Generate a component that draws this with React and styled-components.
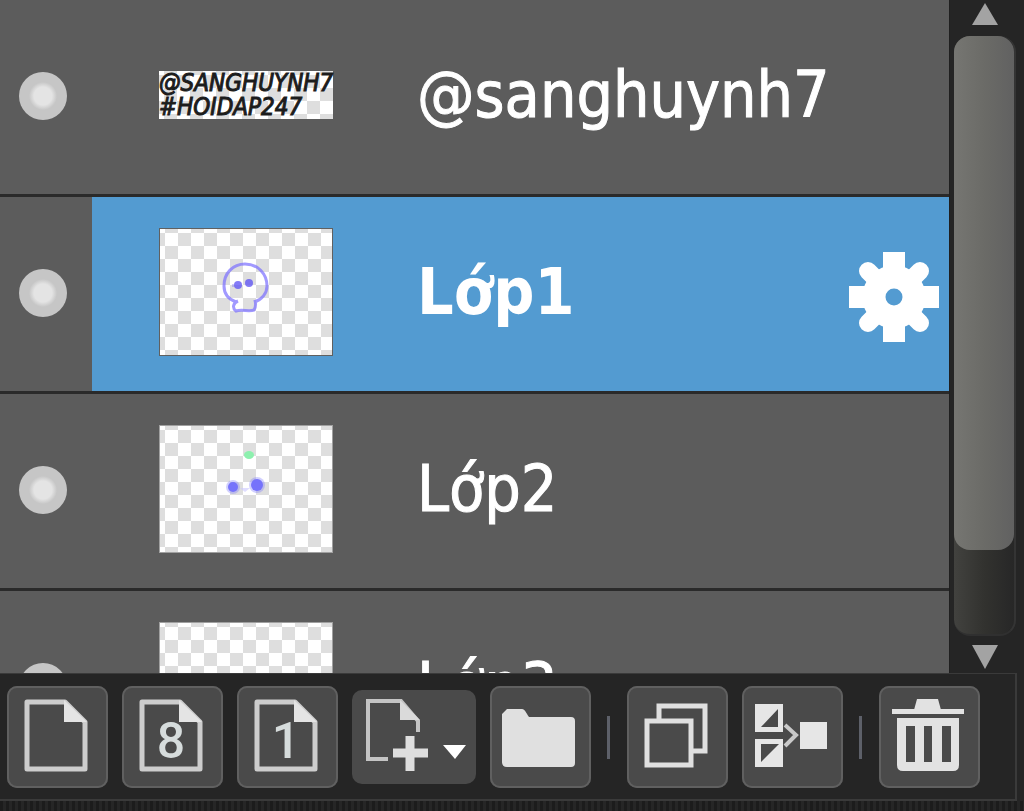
import React, { useState } from "react";
import styled, { createGlobalStyle } from "styled-components";

const layers = [
  { id: "tag", name: "@sanghuynh7", art: "text" },
  { id: "l1", name: "Lớp1", art: "skull" },
  { id: "l2", name: "Lớp2", art: "eyes" },
  { id: "l3", name: "Lớp3", art: "empty" },
];

const Skull = () => (
  <svg width="172" height="126" viewBox="0 0 172 126" aria-hidden="true">
    <g fill="none" stroke="#7a6eff" strokeWidth="3" opacity="0.7">
      <path d="M76 73C68 70 64 64 64 57C64 44 73 35 85 35C98 35 107 45 107 57C107 64 102 71 94 73" />
      <path d="M78 72C73 74 72 79 76 82C82 80 89 83 94 81C96 78 96 75 95 71" />
    </g>
    <g fill="#5b50f5" opacity="0.75">
      <circle cx="78" cy="56" r="4" />
      <circle cx="89" cy="54" r="4" />
      <path d="M72 55h4v3h-4z" opacity="0.4" />
    </g>
  </svg>
);

const Eyes = () => (
  <svg width="172" height="126" viewBox="0 0 172 126" aria-hidden="true">
    <ellipse cx="89" cy="29" rx="5" ry="4" fill="#8df0ae" />
    <circle cx="73" cy="61" r="7" fill="#7a78fb" opacity="0.35" />
    <circle cx="73" cy="61" r="5" fill="#7673fb" />
    <circle cx="97" cy="59" r="8" fill="#7a78fb" opacity="0.35" />
    <circle cx="97" cy="59" r="6" fill="#7673fb" />
    <path d="M80 62L90 62L85 66Z" fill="#c9c6ff" opacity="0.6" />
  </svg>
);

const GearIcon = () => (
  <svg width="90" height="90" viewBox="-45 -45 90 90" aria-hidden="true">
    <g stroke="white" fill="none">
      <path d="M0 -45V-14M0 45V14M-45 0H-14M45 0H14" strokeWidth="22" />
      <path
        d="M-26 -26L-17 -17M26 -26L17 -17M-26 26L-17 17M26 26L17 17"
        strokeWidth="18"
        strokeLinecap="round"
      />
      <circle r="20" strokeWidth="23" />
    </g>
  </svg>
);

const PageIcon = ({ digit }) => (
  <svg width="101" height="102" viewBox="0 0 101 102" aria-hidden="true">
    <path
      d="M20 16H58L78 36V83H20Z"
      fill="none"
      stroke="#cdcdcd"
      strokeWidth="5"
      strokeLinejoin="round"
    />
    <path d="M57 14L80 36H57Z" fill="#e4e4e4" />
    {digit && (
      <text
        x="49"
        y="72"
        textAnchor="middle"
        fontSize="50"
        fontWeight="500"
        fill="#d6dcdc"
      >
        {digit}
      </text>
    )}
  </svg>
);

const AddPageIcon = () => (
  <svg width="124" height="94" viewBox="0 0 124 94" aria-hidden="true">
    <path
      d="M36 69H16V11H49L66 31V42"
      fill="none"
      stroke="#c4c4c4"
      strokeWidth="4"
    />
    <path d="M48 10L68 30H48Z" fill="#dadada" />
    <path d="M58 46V81M41 63H76" stroke="#dedede" strokeWidth="9" />
    <path d="M91 55H114L103 69Z" fill="white" />
  </svg>
);

const FolderIcon = () => (
  <svg width="101" height="102" viewBox="0 0 101 102" aria-hidden="true">
    <path
      d="M12 28L17 23H32C35 23 36 27 39 31H81Q85 31 85 35V77Q85 81 81 81H17Q12 81 12 76Z"
      fill="#e0e0e0"
    />
  </svg>
);

const CopyIcon = () => (
  <svg width="101" height="102" viewBox="0 0 101 102" aria-hidden="true">
    <g fill="#4a4a4a" stroke="#e0e0e0" strokeWidth="5">
      <rect x="32" y="20" width="46" height="45" />
      <rect x="20" y="35" width="44" height="44" />
    </g>
  </svg>
);

const MergeIcon = () => (
  <svg width="101" height="102" viewBox="0 0 101 102" aria-hidden="true">
    <g fill="#e6e6e6">
      <rect x="13" y="18" width="28" height="28" />
      <rect x="13" y="53" width="28" height="28" />
      <rect x="58" y="36" width="27" height="27" />
    </g>
    <path d="M19 41H36V23ZM19 58H37L19 76Z" fill="#4a4a4a" />
    <path d="M43 39L54 49L43 60" fill="none" stroke="#c9c9c9" strokeWidth="4" />
  </svg>
);

const TrashIcon = () => (
  <svg width="101" height="102" viewBox="0 0 101 102" aria-hidden="true">
    <path d="M35 24L38 13H59L62 24Z" fill="#e2e2e2" />
    <path d="M13 23H85V28H13Z" fill="#e2e2e2" />
    <path
      fillRule="evenodd"
      d="M18 32H80V79Q80 85 74 85H24Q18 85 18 79ZM27 40V76H36V40ZM45 40V76H53V40ZM63 40V76H72V40Z"
      fill="#e2e2e2"
    />
  </svg>
);

const Thumbnail = ({ art, active }) => {
  if (art === "text") {
    return (
      <TextThumb>
        <span>@SANGHUYNH7</span>
        <span>#HOIDAP247</span>
      </TextThumb>
    );
  }
  return (
    <Thumb $active={active}>
      {art === "skull" && <Skull />}
      {art === "eyes" && <Eyes />}
    </Thumb>
  );
};

const App = () => {
  const [selected, setSelected] = useState("l1");
  return (
    <>
      <GlobalStyle />
      <Panel>
        <ListArea>
          <LayerList>
            {layers.map((layer) => {
              const active = layer.id === selected;
              return (
                <Row key={layer.id}>
                  <ToggleCell>
                    <Toggle
                      type="checkbox"
                      defaultChecked
                      aria-label={`Hiện ${layer.name}`}
                    />
                  </ToggleCell>
                  <LayerCell $active={active}>
                    <LayerButton
                      type="button"
                      $active={active}
                      onClick={() => setSelected(layer.id)}
                    >
                      <Thumbnail art={layer.art} active={active} />
                      <span>{layer.name}</span>
                    </LayerButton>
                    {active && (
                      <GearButton type="button" aria-label="Cài đặt lớp">
                        <GearIcon />
                      </GearButton>
                    )}
                  </LayerCell>
                </Row>
              );
            })}
          </LayerList>
          <ScrollBar>
            <Arrow type="button" aria-label="Cuộn lên">
              <svg width="26" height="22" viewBox="0 0 26 22">
                <path d="M13 0L26 22H0Z" fill="#a3a3a3" />
              </svg>
            </Arrow>
            <Track>
              <ScrollThumb />
            </Track>
            <Arrow type="button" aria-label="Cuộn xuống">
              <svg width="26" height="24" viewBox="0 0 26 24">
                <path d="M0 0H26L13 24Z" fill="#a3a3a3" />
              </svg>
            </Arrow>
          </ScrollBar>
        </ListArea>
        <Toolbar>
          <ToolButton type="button" aria-label="Lớp màu mới">
            <PageIcon />
          </ToolButton>
          <ToolButton type="button" aria-label="Lớp 8 bit mới">
            <PageIcon digit="8" />
          </ToolButton>
          <ToolButton type="button" aria-label="Lớp 1 bit mới">
            <PageIcon digit="1" />
          </ToolButton>
          <ToolButton type="button" aria-label="Thêm lớp" $menu>
            <AddPageIcon />
          </ToolButton>
          <ToolButton type="button" aria-label="Thư mục mới">
            <FolderIcon />
          </ToolButton>
          <Divider />
          <ToolButton type="button" aria-label="Nhân đôi lớp">
            <CopyIcon />
          </ToolButton>
          <ToolButton type="button" aria-label="Gộp lớp">
            <MergeIcon />
          </ToolButton>
          <Divider />
          <ToolButton type="button" aria-label="Xóa lớp">
            <TrashIcon />
          </ToolButton>
        </Toolbar>
        <BottomEdge />
      </Panel>
    </>
  );
};

const GlobalStyle = createGlobalStyle`
  * {
    box-sizing: border-box;
  }
  body {
    margin: 0;
    background: #252525;
    font-family: "DejaVu Sans Condensed", "DejaVu Sans", sans-serif;
  }
  button {
    border: none;
    padding: 0;
    margin: 0;
    background: none;
    color: inherit;
    font: inherit;
    cursor: pointer;
  }
  svg {
    display: block;
  }
`;

const Panel = styled.main`
  display: flex;
  flex-direction: column;
  height: 100vh;
  background: #252525;
`;

const ListArea = styled.div`
  display: flex;
  flex: 1;
  min-height: 0;
`;

const LayerList = styled.div`
  flex: 1;
  min-width: 0;
  overflow: hidden;
  background: #5c5c5c;
`;

const Row = styled.div`
  display: flex;
  height: 197px;
  border-bottom: 3px solid #2a2a2a;
`;

const ToggleCell = styled.div`
  display: flex;
  flex: none;
  align-items: center;
  width: 92px;
  padding: 0 0 2px 19px;
`;

const Toggle = styled.input`
  appearance: none;
  width: 48px;
  height: 48px;
  margin: 0;
  border-radius: 50%;
  background: #777;
  cursor: pointer;
  &:checked {
    background: radial-gradient(circle, #e4e4e4 9px, #c6c6c6 14px);
  }
`;

const LayerCell = styled.div`
  display: flex;
  flex: 1;
  align-items: center;
  min-width: 0;
  padding-right: 10px;
  background: ${({ $active }) => ($active ? "#539bd1" : "transparent")};
`;

const LayerButton = styled.button`
  display: flex;
  flex: 1;
  align-items: center;
  gap: 84px;
  min-width: 0;
  height: 100%;
  padding: 0 0 4px 67px;
  color: white;
  font-size: 64px;
  font-weight: ${({ $active }) => ($active ? "bold" : "normal")};
  text-align: left;
  white-space: nowrap;
  -webkit-text-stroke: ${({ $active }) => ($active ? "0" : "1px")} white;
`;

const Thumb = styled.div`
  flex: none;
  width: 174px;
  height: 128px;
  border: 1px solid ${({ $active }) => ($active ? "#606060" : "#a0a0a0")};
  background: conic-gradient(#dedede 25%, white 0 50%, #dedede 0 75%, white 0)
    5px 4px / 26px 26px;
`;

const TextThumb = styled(Thumb)`
  display: flex;
  flex-direction: column;
  justify-content: center;
  height: 48px;
  border: none;
  color: #1c1c1c;
  font-size: 24px;
  font-style: italic;
  font-weight: normal;
  line-height: 24px;
  -webkit-text-stroke: 1px #1c1c1c;
`;

const GearButton = styled.button`
  flex: none;
  padding-top: 6px;
`;

const ScrollBar = styled.div`
  display: flex;
  flex: none;
  flex-direction: column;
  align-items: center;
  width: 75px;
  padding: 3px 8px 4px 4px;
  border-left: 1px solid #1f1f1f;
`;

const Arrow = styled.button`
  flex: none;
`;

const Track = styled.div`
  flex: 1;
  width: 100%;
  min-height: 0;
  margin: 11px 0 9px;
  border-right: 2px solid #343434;
  border-bottom: 2px solid #303030;
  border-radius: 16px;
  background: linear-gradient(90deg, #42423f, #32322f 50%, #272727);
`;

const ScrollThumb = styled.div`
  height: 86%;
  border-radius: 16px;
  background: linear-gradient(90deg, #767672, #6b6b67 50%, #616161);
`;

const Toolbar = styled.div`
  display: flex;
  flex: none;
  align-items: center;
  gap: 14px;
  margin-right: 7px;
  padding: 12px 7px 11px;
  border: solid #3a3a3a;
  border-width: 1px 2px 2px 0;
`;

const ToolButton = styled.button`
  flex: none;
  width: ${({ $menu }) => ($menu ? "124px" : "101px")};
  height: ${({ $menu }) => ($menu ? "94px" : "102px")};
  border-radius: 10px;
  background: #4a4a4a;
  box-shadow: ${({ $menu }) => ($menu ? "none" : "inset 0 0 0 2px #606060")};
  font-family: Roboto, sans-serif;
`;

const Divider = styled.div`
  flex: none;
  width: 8px;
  height: 43px;
  border: solid transparent;
  border-width: 0 3px 0 2px;
  background: #5d6069 padding-box;
`;

const BottomEdge = styled.div`
  flex: none;
  height: 10px;
  background: repeating-linear-gradient(90deg, #1c1c1c 0 3px, #262626 3px 6px);
`;

export default App;
